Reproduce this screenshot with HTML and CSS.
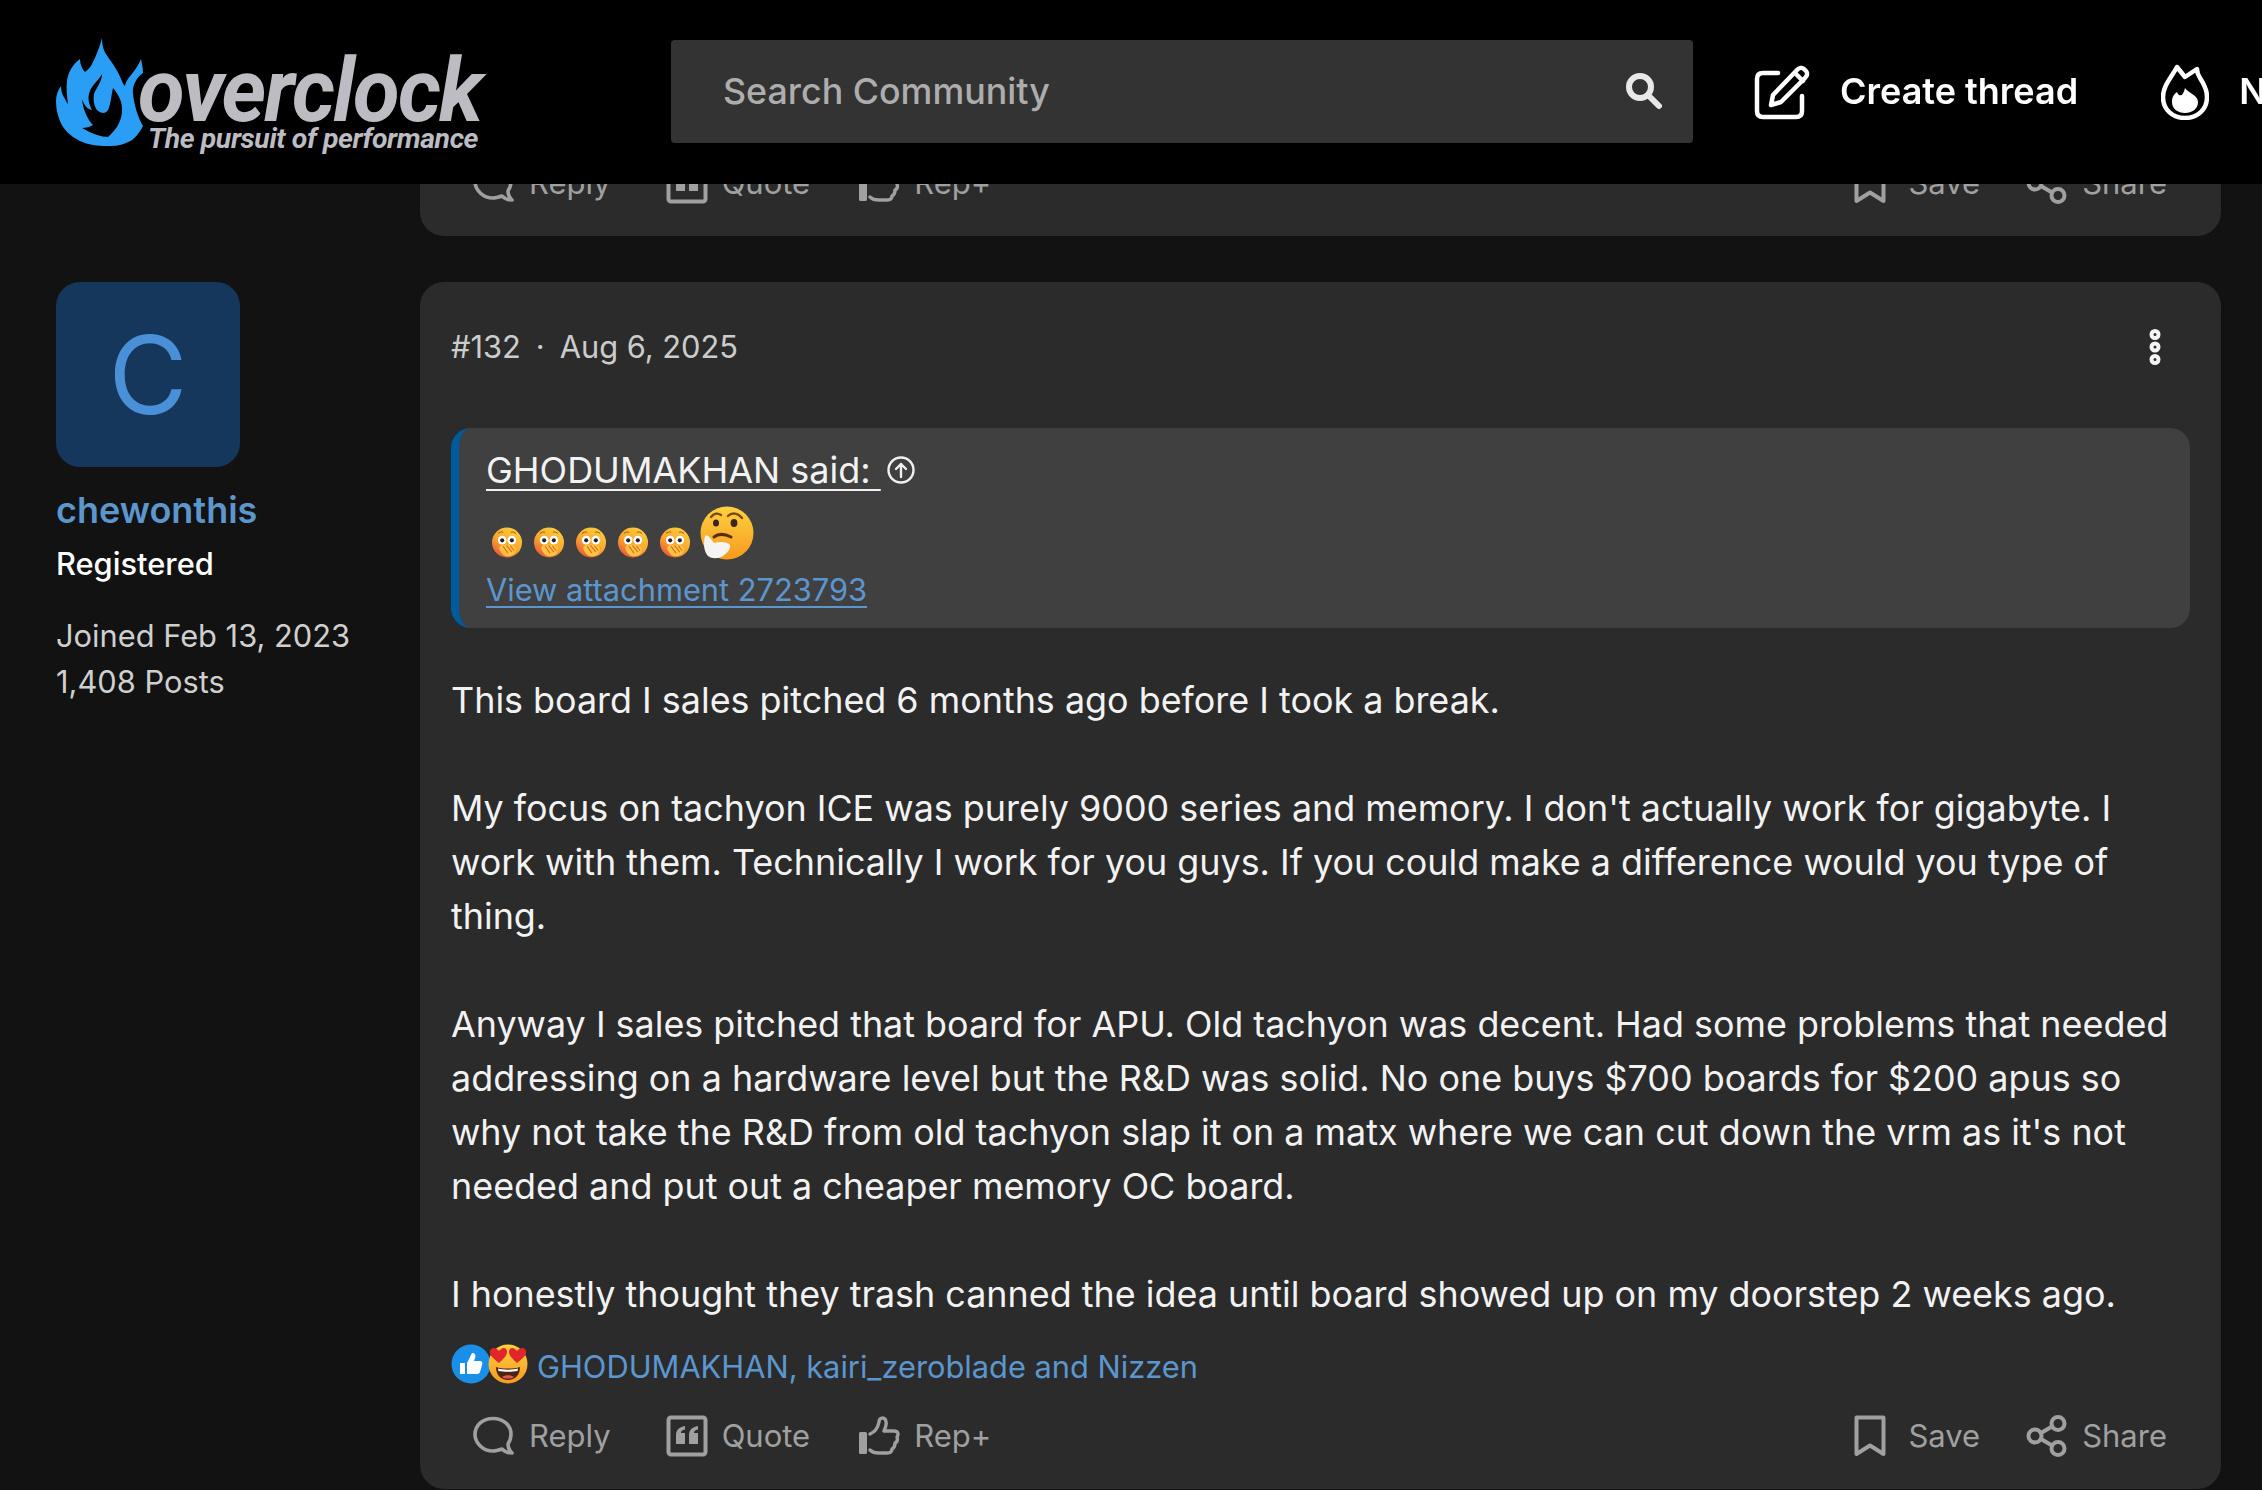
FILE: index.html
```html
<!DOCTYPE html>
<html lang="en">
<head>
  <meta charset="UTF-8">
  <meta name="viewport" content="width=device-width, initial-scale=1.0">
  <title>overclock - Thread</title>
  <link rel="stylesheet" href="styles.css">
</head>
<body>

<svg class="defs" width="0" height="0" aria-hidden="true">
  <defs>
    <linearGradient id="faceGrad" x1="0" y1="0" x2="0" y2="1">
      <stop offset="0" stop-color="#fdd13f"/>
      <stop offset="1" stop-color="#f79a1f"/>
    </linearGradient>
    <linearGradient id="shushGrad" x1=".8" y1="0" x2=".2" y2="1">
      <stop offset="0" stop-color="#fdcf3e"/>
      <stop offset=".55" stop-color="#f9a62c"/>
      <stop offset="1" stop-color="#e8523a"/>
    </linearGradient>
    <symbol id="shushFace" viewBox="0 0 32 32">
      <circle cx="16" cy="16" r="15.5" fill="url(#shushGrad)"/>
      <path d="M6.500 7C8 5.200 10 4.800 12 5.400M20 5.400C22 4.800 24 5.200 25.500 7" stroke="#9a5a1a" stroke-width="1" fill="none"/>
      <circle cx="11" cy="13.500" r="4.500" fill="#fff"/>
      <circle cx="21" cy="13.500" r="4.500" fill="#fff"/>
      <circle cx="11" cy="13.800" r="2.100" fill="#2e1c22"/>
      <circle cx="21" cy="13.800" r="2.100" fill="#2e1c22"/>
      <path d="M8 22C8 20 10 18.500 12 19C15 17.500 21 18 24.500 21C26 23 25 27 22 29C18 31 14 30.500 11.500 28C9.500 26.500 8.500 24 8 22Z" fill="#ffc445"/>
      <path d="M12 20L17 27M15.500 19L21 26M19.500 19.500L23.500 24.500" stroke="#d96a1a" stroke-width="1.100" fill="none"/>
    </symbol>
  </defs>
</svg>

<header class="topbar">
  <a class="logo" href="#">
    <svg class="logo-flame" viewBox="0 0 88 108">
      <path fill="#2a9df4" d="M46 0C46 8 48 14 52 19C57 26 62 33 66 43C67 46 68 47 69 48C70 40 80 34 85 21C86 26 87 30 87 35C80 40 76 48 77 56C78 66 82 80 87 88C82 98 76 103 70 105C63 108 57 108 51 108C42 108 32 107 24 103C14 98 7 91 4 83C1 76 0 69 0 63C0 57 2 52 5 48C5 54 7 58 9 61C10 63 11 65 12 66C11 58 10 50 11 43C12 35 16 27 24 21C24 26 26 31 29 34C33 31 35 28 36 26C39 20 42 14 46 0Z"/>
      <path fill="#000" d="M26 61C28 67 31 71 36 72C33 66 31 60 34 53C36 47 43 42 46 36C46 44 40 50 38 56C37 62 38 68 41 72C45 76 50 76 52 72C55 66 55 58 57 50C62 56 67 64 66 74C65 84 60 92 52 99C46 99 36 96 26 90C30 90 34 89 37 87C32 82 27 72 26 61Z"/>
    </svg>
    <span class="logo-text">
      <span class="logo-name">overclock</span>
      <span class="logo-tag">The pursuit of performance</span>
    </span>
  </a>

  <div class="search">
    <span class="search-hint">Search Community</span>
    <svg class="search-icon" viewBox="0 0 38 38">
      <circle cx="15" cy="15" r="11" fill="none" stroke="#e8e8e8" stroke-width="6"/>
      <path d="M23 23L34 34" stroke="#e8e8e8" stroke-width="6" stroke-linecap="round"/>
    </svg>
  </div>

  <a class="top-link" href="#">
    <svg class="top-icon" viewBox="0 0 56 56" fill="none" stroke="#fff" stroke-width="4.5" stroke-linecap="round" stroke-linejoin="round">
      <path d="M24 9H9C5 9 3 11 3 15V47C3 51 5 53 9 53H42C46 53 48 51 48 47V32"/>
      <path d="M17 41L19 31L43 6C45 4 48 3 50 5L52 7C54 9 53 12 51 14L27 38Z"/>
      <path d="M41 9L49 17"/>
    </svg>
    <span>Create thread</span>
  </a>
  <a class="top-link" href="#">
    <svg class="top-icon fire" viewBox="0 0 48 56">
      <path fill="none" stroke="#fff" stroke-width="4.5" stroke-linejoin="round" d="M16 3L24 13L36 5C36 9 37 11 39 14C43 20 46 26 46 33C46 46 36 54 24 54C12 54 2 46 2 33C2 22 10 14 16 3Z"/>
      <path fill="#fff" d="M24 24C27 29 37 31 37 38C37 45 31 49 24 49C17 49 11 45 11 38C11 33 13 30 16 28C18 33 22 33 24 24Z"/>
    </svg>
    <span>New posts</span>
  </a>
</header>

<main class="thread">

  <div class="post-row prev-row">
    <div class="author"></div>
    <article class="post prev-post">
      <div class="actions">
        <div class="actions-left">
          <a class="action" href="#"><svg class="ic"><use href="#icReply"/></svg>Reply</a>
          <a class="action action-quote" href="#"><svg class="ic"><use href="#icQuote"/></svg>Quote</a>
          <a class="action" href="#"><svg class="ic"><use href="#icRep"/></svg>Rep+</a>
        </div>
        <div class="actions-right">
          <a class="action action-save" href="#"><svg class="ic"><use href="#icSave"/></svg>Save</a>
          <a class="action" href="#"><svg class="ic"><use href="#icShare"/></svg>Share</a>
        </div>
      </div>
    </article>
  </div>

  <div class="post-row">
    <aside class="author">
      <div class="avatar">C</div>
      <a class="author-name" href="#">chewonthis</a>
      <div class="author-role">Registered</div>
      <div class="author-meta">Joined Feb 13, 2023</div>
      <div class="author-meta">1,408 Posts</div>
    </aside>

    <article class="post">
      <div class="post-head">
        <span>#132<span class="sep">·</span>Aug 6, 2025</span>
        <svg class="more" viewBox="0 0 12 36">
          <circle cx="6" cy="5.500" r="3.500" fill="none" stroke="#f4f4f4" stroke-width="4"/>
          <circle cx="6" cy="18" r="3.500" fill="none" stroke="#f4f4f4" stroke-width="4"/>
          <circle cx="6" cy="30.500" r="3.500" fill="none" stroke="#f4f4f4" stroke-width="4"/>
        </svg>
      </div>

      <blockquote class="quote">
        <div class="quote-by">
          <a href="#">GHODUMAKHAN said: </a>
          <svg class="quote-up" viewBox="0 0 30 30" fill="none" stroke="#f0f0f0" stroke-width="2.4" stroke-linecap="round" stroke-linejoin="round">
            <circle cx="15" cy="15" r="12.5"/>
            <path d="M15 22V9M10 14L15 9L20 14"/>
          </svg>
        </div>
        <div class="quote-emoji">
          <svg class="em"><use href="#shushFace"/></svg>
          <svg class="em"><use href="#shushFace"/></svg>
          <svg class="em"><use href="#shushFace"/></svg>
          <svg class="em"><use href="#shushFace"/></svg>
          <svg class="em"><use href="#shushFace"/></svg>
          <svg class="em-think" viewBox="0 0 54 54">
            <circle cx="27" cy="27" r="26.5" fill="url(#faceGrad)"/>
            <path d="M11 11C14 7 18 7 21 9" stroke="#7a4a12" stroke-width="2.4" fill="none" stroke-linecap="round"/>
            <path d="M28 10C32 6 38 7 42 12" stroke="#7a4a12" stroke-width="2.4" fill="none" stroke-linecap="round"/>
            <ellipse cx="16" cy="17" rx="3" ry="3.600" fill="#3a2522"/>
            <ellipse cx="34" cy="17" rx="3.400" ry="4" fill="#3a2522"/>
            <path d="M14 31C19 27 25 28 31 31" stroke="#5a2c10" stroke-width="3" fill="none" stroke-linecap="round"/>
            <path d="M5 30C7 29 9 30 10 32L14 37C20 35 28 36 30 39C31 43 27 47 23 50C18 53 12 53 8 50C4 46 3 38 5 30Z" fill="#f4f4f2"/>
          </svg>
        </div>
        <a class="quote-attach" href="#">View attachment 2723793</a>
      </blockquote>

      <div class="post-body">
        This board I sales pitched 6 months ago before I took a break.<br>
        <br>
        My focus on tachyon ICE was purely 9000 series and memory. I don't actually work for gigabyte. I work with them. Technically I work for you guys. If you could make a difference would you type of thing.<br>
        <br>
        Anyway I sales pitched that board for APU. Old tachyon was decent. Had some problems that needed addressing on a hardware level but the R&amp;D was solid. No one buys $700 boards for $200 apus so why not take the R&amp;D from old tachyon slap it on a matx where we can cut down the vrm as it's not needed and put out a cheaper memory OC board.<br>
        <br>
        I honestly thought they trash canned the idea until board showed up on my doorstep 2 weeks ago.
      </div>

      <div class="reactions">
        <svg class="react" viewBox="0 0 40 40">
          <circle cx="20" cy="20" r="19.5" fill="#1a8fe8"/>
          <path fill="#fff" d="M9 19H14V30H9ZM16 19L21 9C24 9 25 11 24 14L23 17H29C31 17 32 19 31 21L29 28C28 30 27 30 25 30H16Z"/>
        </svg>
        <svg class="react react-love" viewBox="0 0 40 40">
          <circle cx="20" cy="20" r="19.5" fill="url(#faceGrad)"/>
          <path fill="#e0252b" d="M11 19C5 14 1 11 2 7C3 3 8 3 11 7C14 3 19 3 19 8C19 12 15 15 11 19ZM29 19C25 15 21 12 21 8C21 3 26 3 29 7C32 3 37 3 38 7C39 11 35 14 29 19Z"/>
          <path fill="#4a2410" d="M8 23C14 25 26 25 32 23C32 31 27 36 20 36C13 36 8 31 8 23Z"/>
          <path fill="#fff" d="M10 24.5C15 26 25 26 30 24.5L29.5 27C25 28 15 28 10.500 27Z"/>
          <path fill="#e4574d" d="M14 33C17 30.500 23 30.500 26 33C24 35 16 35 14 33Z"/>
        </svg>
        <a class="react-names" href="#">GHODUMAKHAN, kairi_zeroblade and Nizzen</a>
      </div>

      <div class="actions">
        <div class="actions-left">
          <a class="action" href="#"><svg class="ic"><use href="#icReply"/></svg>Reply</a>
          <a class="action action-quote" href="#"><svg class="ic"><use href="#icQuote"/></svg>Quote</a>
          <a class="action" href="#"><svg class="ic"><use href="#icRep"/></svg>Rep+</a>
        </div>
        <div class="actions-right">
          <a class="action action-save" href="#"><svg class="ic"><use href="#icSave"/></svg>Save</a>
          <a class="action" href="#"><svg class="ic"><use href="#icShare"/></svg>Share</a>
        </div>
      </div>
    </article>
  </div>
</main>

<svg class="defs" width="0" height="0" aria-hidden="true">
  <defs>
    <symbol id="icReply" viewBox="0 0 42 42">
      <path fill="none" stroke="#a0a0a0" stroke-width="3.6" stroke-linejoin="round" d="M20 3.500C30 3.500 38 10 38 19C38 23 37 26 35 29C35 32 36 35 39 38C35 38 31 36 29 34C26 35 23 36 20 36C10 36 2 28 2 19.500C2 10 10 3.500 20 3.500Z"/>
    </symbol>
    <symbol id="icQuote" viewBox="0 0 42 42">
      <rect x="2.500" y="2.500" width="37" height="37" rx="2.500" fill="none" stroke="#a0a0a0" stroke-width="4"/>
      <path fill="#a0a0a0" d="M10 20C10 15 13 12 19 11V14.500C16 15 15 16 15 18H19V29H10ZM23 20C23 15 26 12 32 11V14.500C29 15 28 16 28 18H32V29H23Z"/>
    </symbol>
    <symbol id="icRep" viewBox="0 0 42 42">
      <rect x="1" y="17" width="8" height="22" rx="1.500" fill="#a0a0a0"/>
      <path fill="none" stroke="#a0a0a0" stroke-width="3.400" stroke-linejoin="round" stroke-linecap="round" d="M12 19C17 17 20 12 21 7C21 3 25 2 27 4C29 7 28 12 26 16H36C40 16 41 19 39 22C40 25 39 27 37 28C37 31 36 33 34 34C34 37 32 38 29 38H21C17 38 14 37 12 35"/>
    </symbol>
    <symbol id="icSave" viewBox="0 0 32 42">
      <path fill="none" stroke="#a0a0a0" stroke-width="4" stroke-linejoin="round" d="M2.500 2.500H29.500V39L16 30.500L2.500 39Z"/>
    </symbol>
    <symbol id="icShare" viewBox="0 0 42 42">
      <g fill="none" stroke="#a0a0a0" stroke-width="4">
        <circle cx="9" cy="21" r="6.500"/>
        <circle cx="32" cy="8.500" r="6.500"/>
        <circle cx="32" cy="33.500" r="6.500"/>
        <path d="M15 18L26 11.500M15 24L26 30.500"/>
      </g>
    </symbol>
  </defs>
</svg>

</body>
</html>
```

FILE: styles.css
```css
* {
  box-sizing: border-box;
}

html, body {
  height: 100%;
}

body {
  margin: 0;
  overflow: hidden;
  background-color: #121212;
  color: #f2f2f2;
  font-family: Inter, "Liberation Sans", sans-serif;
  font-size: 35.9px;
  line-height: 54px;
}

a {
  color: inherit;
  text-decoration: none;
}

.defs {
  display: block;
  height: 0;
}

/* top bar */
.topbar {
  position: fixed;
  top: 0;
  left: 0;
  width: 2262px;
  height: 184px;
  display: flex;
  align-items: center;
  padding: 0 0 1px 56px;
  background-color: #000;
  white-space: nowrap;
  z-index: 5;
}

.logo {
  display: flex;
  width: 615px;
  height: 108px;
  flex: none;
  align-items: flex-start;
}

.logo-flame {
  width: 88px;
  height: 108px;
  flex: none;
}

.logo-text {
  display: flex;
  flex-direction: column;
  margin-left: -6px;
  margin-top: 21px;
  font-family: Roboto, "Liberation Sans", sans-serif;
  font-style: italic;
  color: #bcbcc2;
}

.logo-name {
  font-size: 88px;
  line-height: 64px;
  font-weight: 700;
  letter-spacing: -2px;
  transform: scaleX(.97);
  transform-origin: left;
}

.logo-tag {
  margin-left: 10px;
  font-size: 28px;
  line-height: 32px;
  font-weight: 700;
  letter-spacing: -.4px;
  transform: scaleX(1.015);
  transform-origin: left;
}

.search {
  display: flex;
  width: 1022px;
  height: 103px;
  flex: none;
  align-items: center;
  justify-content: space-between;
  padding: 0 30px 0 52px;
  background-color: #333;
  border-radius: 4px;
}

.search-hint {
  padding-bottom: 2px;
  color: #adadad;
  font-size: 35.8px;
  font-weight: 500;
}

.search-icon {
  width: 38px;
  height: 38px;
  margin-bottom: 2px;
}

.top-link {
  display: flex;
  flex: none;
  align-items: center;
  gap: 30px;
  margin-left: 61px;
  font-size: 36px;
  font-weight: 600;
  color: #fff;
}

.top-link span {
  padding-bottom: 2px;
}

.top-link + .top-link {
  margin-left: 83px;
}

.top-icon {
  width: 56px;
  height: 56px;
}

.fire {
  width: 48px;
}

/* posts */
.thread {
  padding: 0 41px 0 56px;
}

.post-row {
  display: flex;
  margin-bottom: 46px;
}

.prev-row {
  height: 236px;
}

.author {
  width: 364px;
  flex: none;
}

.post {
  flex: 1;
  padding: 0 31px 18px 31px;
  background-color: #2b2b2b;
  border-radius: 24px;
}

.prev-post {
  display: flex;
  flex-direction: column;
  justify-content: flex-end;
}

.avatar {
  width: 184px;
  height: 185px;
  background-color: #15375c;
  border-radius: 24px;
  color: #4a90d9;
  font-size: 108px;
  line-height: 185px;
  text-align: center;
}

.author-name {
  display: block;
  margin-top: 16px;
  color: #5c96cf;
  font-size: 36px;
  font-weight: 600;
}

.author-role {
  margin-top: 2px;
  color: #fff;
  font-size: 30.8px;
  line-height: 50px;
  font-weight: 500;
}

.author-meta {
  color: #cfcfcf;
  font-size: 30.8px;
  line-height: 46px;
}

.author-role + .author-meta {
  margin-top: 24px;
}

.post-head {
  display: flex;
  height: 130px;
  margin-bottom: 16px;
  align-items: center;
  justify-content: space-between;
  padding-right: 29px;
  color: #ccc;
  font-size: 30.8px;
}

.sep {
  margin: 0 15px;
}

.more {
  width: 12px;
  height: 36px;
}

.quote {
  height: 200px;
  margin: 0 0 45px;
  padding: 15px 27px 0;
  background-color: #404040;
  border-left: 8px solid #005a9e;
  border-radius: 20px;
}

.quote-by {
  display: flex;
  align-items: center;
  height: 54px;
  font-size: 36px;
  color: #f2f2f2;
  white-space: pre;
}

.quote-by a {
  text-decoration: underline;
  text-decoration-thickness: 2px;
  text-underline-offset: 6px;
}

.quote-up {
  width: 30px;
  height: 30px;
  margin-left: 5px;
}

.quote-emoji {
  display: flex;
  align-items: flex-end;
  height: 52px;
  margin-top: 9px;
  padding-left: 5px;
}

.em {
  width: 32px;
  height: 31px;
  margin-right: 10px;
}

.em-think {
  width: 54px;
  height: 54px;
  margin-left: -1px;
  margin-bottom: -2px;
}

.quote-attach {
  display: block;
  margin-top: 7px;
  color: #5c96cf;
  font-size: 30.8px;
  line-height: 50px;
  text-decoration: underline;
  text-decoration-thickness: 2px;
  text-underline-offset: 5px;
}

.post-body {
  color: #f2f2f2;
}

.reactions {
  display: flex;
  align-items: center;
  height: 44px;
  margin-top: 24px;
  font-size: 30.8px;
}

.react {
  width: 40px;
  height: 40px;
  margin-top: -6px;
}

.react-love {
  margin-left: -3px;
}

.react-names {
  margin-left: 9px;
  color: #5c96cf;
}

.actions {
  display: flex;
  height: 70px;
  margin-top: 12px;
  align-items: center;
  justify-content: space-between;
  padding: 0 23px 0 22px;
  color: #a0a0a0;
  font-size: 31px;
}

.actions-left, .actions-right {
  display: flex;
  gap: 46px;
}

.action {
  display: flex;
  align-items: center;
  gap: 14px;
}

.action-quote {
  margin: 0 2px 0 9px;
}

.action-save {
  gap: 22px;
}

.ic {
  width: 42px;
  height: 42px;
}

.action-save .ic {
  width: 32px;
}
```
